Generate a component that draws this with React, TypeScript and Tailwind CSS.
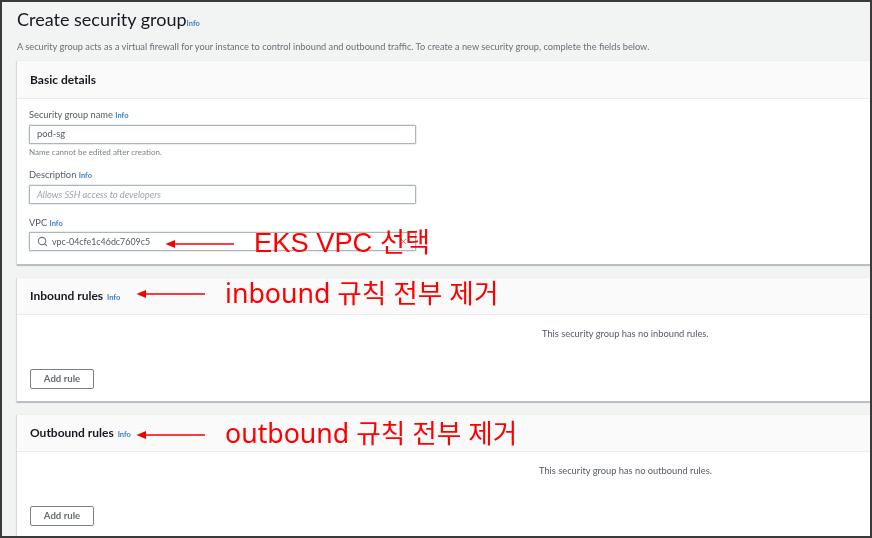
import { Search, X } from "lucide-react";

const Info = ({ className = "" }: { className?: string }) => (
  <span className={`font-bold text-[#3b82c4] ${className}`}>Info</span>
);

const Arrow = ({ className }: { className: string }) => (
  <svg className={`absolute ${className}`} width="70" height="10" viewBox="0 0 70 10">
    <path d="M9 5H69" stroke="#f00000" strokeWidth="1.6" />
    <path d="M0.5 5L10 1V9Z" fill="#f00000" />
  </svg>
);

const Note = ({ className, children }: { className: string; children: string }) => (
  <div className={`absolute whitespace-nowrap text-[#fe0000] leading-[36px] ${className}`}>
    {children}
  </div>
);

const Card = ({ title, children, headClass, className = "" }: { title: React.ReactNode; children: React.ReactNode; headClass: string; className?: string }) => (
  <section className={`bg-white border-b-2 border-[#b8c0c6] shadow-[-1px_0_1px_#d5dbdb] ${className}`}>
    <div className={`flex items-center px-[13px] bg-[#fafafa] border-b border-[#eaeded] ${headClass}`}>
      {title}
    </div>
    {children}
  </section>
);

const Field = ({ children, className = "" }: { children: React.ReactNode; className?: string }) => (
  <div className={`h-[19px] w-[387px] flex items-center bg-white border border-[#aab7b8] rounded-[1px] shadow-[0_0_0_0.5px_#d5dbdb] ${className}`}>
    {children}
  </div>
);

const RuleBody = ({ text, indent }: { text: string; indent: string }) => (
  <div className="h-[87px] pl-[13px] flex flex-col">
    <p className={`mt-[13px] h-[12px] leading-[12px] text-[9.3px] text-[#545b64] ${indent}`}>{text}</p>
    <button className="mt-[29px] w-[64px] h-[20px] flex items-center justify-center bg-white border border-[#7b8287] rounded-[2px] text-[9.6px] font-bold text-[#656c74]">
      Add rule
    </button>
  </div>
);

export default function App() {
  return (
    <div className="relative w-[872px] h-[538px] overflow-hidden bg-[#f2f3f3] border-2 border-[#3a3a3a] font-['Lato',sans-serif] pl-[15px] blur-[0.5px]">
      <div className="h-[59px] pt-[5px]">
        <h1 className="flex items-baseline h-[25px] text-[#16191f] text-[18px] leading-[25px]">
          Create security group<Info className="text-[7.5px]" />
        </h1>
        <p className="mt-[8px] h-[13px] text-[9.23px] leading-[13px] text-[#6a7078]">
          A security group acts as a virtual firewall for your instance to control inbound and outbound traffic. To create a new security group, complete the fields below.
        </p>
      </div>

      <Card headClass="h-[38px]" className="h-[205px]" title={<h2 className="text-[12px] font-bold text-[#16191f]">Basic details</h2>}>
        <div className="pl-[12px] pt-[9px]">
          <label className="block h-[14px] leading-[14px] text-[9.3px] text-[#545b64]">
            Security group name <Info className="text-[7.5px]" />
          </label>
          <Field className="mt-[3px] pl-[7px] text-[9.4px] text-[#545b64]">pod-sg</Field>
          <p className="mt-[3px] h-[10px] leading-[10px] text-[8px] text-[#7d8489]">Name cannot be edited after creation.</p>
          <label className="mt-[11px] block h-[14px] leading-[14px] text-[9.3px] text-[#545b64]">
            Description <Info className="text-[7.5px]" />
          </label>
          <Field className="mt-[3px] pl-[7px] text-[9.3px] italic text-[#9ba3a8]">Allows SSH access to developers</Field>
          <label className="mt-[12px] block h-[14px] leading-[14px] text-[9.3px] text-[#545b64]">
            VPC <Info className="text-[7.5px]" />
          </label>
          <Field className="mt-[2px] pl-[7px] text-[8.9px] text-[#545b64] relative">
            <Search size={11} strokeWidth={2.2} className="text-[#687078] mr-[4px]" />
            vpc-04cfe1c46dc7609c5
            <X size={9} strokeWidth={2} className="absolute right-[7px] text-[#687078]" />
          </Field>
        </div>
      </Card>

      <div className="h-[12px]" />

      <Card headClass="h-[37px]" className="h-[125px]" title={<h2 className="text-[12px] font-bold text-[#16191f]">Inbound rules <Info className="text-[7.5px] ml-[1px]" /></h2>}>
        <RuleBody text="This security group has no inbound rules." indent="ml-[512px]" />
      </Card>

      <div className="h-[12px]" />

      <Card headClass="h-[37px]" className="h-[125px] border-b-0" title={<h2 className="text-[12px] font-bold text-[#16191f]">Outbound rules <Info className="text-[7.5px] ml-[1px]" /></h2>}>
        <RuleBody text="This security group has no outbound rules." indent="ml-[509px]" />
      </Card>

      <Arrow className="left-[163px] top-[237px]" />
      <Note className="left-[252px] top-[223px] text-[27.3px] font-['Liberation_Sans','Noto_Sans_CJK_KR',sans-serif]">EKS VPC 선택</Note>
      <Arrow className="left-[134px] top-[287px]" />
      <Note className="left-[223px] top-[273px] text-[26.7px] font-['Noto_Sans','Noto_Sans_CJK_KR',sans-serif]">inbound 규칙 전부 제거</Note>
      <Arrow className="left-[134px] top-[428px]" />
      <Note className="left-[223px] top-[413px] text-[26.7px] font-['Noto_Sans','Noto_Sans_CJK_KR',sans-serif]">outbound 규칙 전부 제거</Note>
    </div>
  );
}
